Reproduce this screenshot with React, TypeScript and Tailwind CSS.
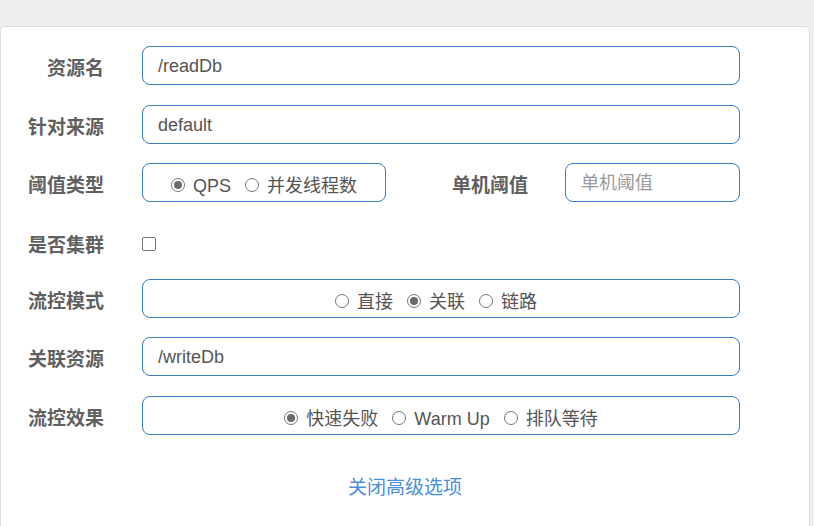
import React from "react";

const font = { fontFamily: '"Liberation Sans", "Noto Sans CJK SC", sans-serif' };

function Radio({ checked, label, first }: { checked?: boolean; label: string; first?: boolean }) {
  return (
    <span className={`flex items-center ${first ? "" : "ml-[14px]"}`}>
      <span className="w-[14px] h-[14px] rounded-full border border-[#767676] bg-white flex items-center justify-center mr-[8px]">
        {checked && <span className="w-[8px] h-[8px] rounded-full bg-[#6b6b6b]" />}
      </span>
      <span className="text-[18px] text-[#555] leading-none pt-[3px]">{label}</span>
    </span>
  );
}

function Label({ children, w = "w-[103px]", pt = "pt-[6px]" }: { children: React.ReactNode; w?: string; pt?: string }) {
  return (
    <div className={`${w} ${pt} text-right text-[19px] font-bold text-[#606060] shrink-0 leading-none`}>{children}</div>
  );
}

const boxCls =
  "h-[39px] border border-[#3a7bbd] rounded-[8px] bg-white flex items-center shrink-0";

export default function App() {
  return (
    <div className="min-h-[526px] bg-[#efefef] pt-[26px]" style={font}>
      <div className="w-[810px] h-[500px] bg-white border border-b-0 border-[#dcdcdc] rounded-t-[5px] pt-[19px]">
        {/* row 1 */}
        <div className="flex items-center h-[39px]">
          <Label>资源名</Label>
          <div className={`${boxCls} ml-[38px] w-[598px] px-[15px] pt-[1px] text-[18px] text-[#555]`}>/readDb</div>
        </div>
        {/* row 2 */}
        <div className="flex items-center h-[39px] mt-[20px]">
          <Label>针对来源</Label>
          <div className={`${boxCls} ml-[38px] w-[598px] px-[15px] pt-[1px] text-[18px] text-[#555]`}>default</div>
        </div>
        {/* row 3 */}
        <div className="flex items-center h-[39px] mt-[19px]">
          <Label>阈值类型</Label>
          <div className={`${boxCls} ml-[38px] w-[244px] justify-center pt-[4px]`}>
            <Radio first checked label="QPS" />
            <Radio label="并发线程数" />
          </div>
          <Label w="w-[142px]">单机阈值</Label>
          <div className={`${boxCls} ml-[37px] w-[175px] px-[15px] pt-[1px] text-[18px] text-[#9a9a9a]`}>单机阈值</div>
        </div>
        {/* row 4 */}
        <div className="flex items-center h-[38px] mt-[19px] pt-[8px]">
          <Label pt="pt-[3px]">是否集群</Label>
          <span className="ml-[38px] w-[14px] h-[14px] rounded-[2px] border border-[#767676] bg-white" />
        </div>
        {/* row 5 */}
        <div className="flex items-center h-[39px] mt-[20px]">
          <Label>流控模式</Label>
          <div className={`${boxCls} ml-[38px] w-[598px] justify-center pr-[10px] pt-[4px]`}>
            <Radio first label="直接" />
            <Radio checked label="关联" />
            <Radio label="链路" />
          </div>
        </div>
        {/* row 6 */}
        <div className="flex items-center h-[39px] mt-[19px]">
          <Label>关联资源</Label>
          <div className={`${boxCls} ml-[38px] w-[598px] px-[15px] pt-[1px] text-[18px] text-[#555]`}>/writeDb</div>
        </div>
        {/* row 7 */}
        <div className="flex items-center h-[39px] mt-[20px]">
          <Label>流控效果</Label>
          <div className={`${boxCls} ml-[38px] w-[598px] justify-center pt-[4px]`}>
            <Radio first checked label="快速失败" />
            <Radio label="Warm Up" />
            <Radio label="排队等待" />
          </div>
        </div>
        <div className="flex justify-center mt-[43px]">
          <span className="text-[19px] text-[#4a8fd6] leading-none">关闭高级选项</span>
        </div>
      </div>
    </div>
  );
}
